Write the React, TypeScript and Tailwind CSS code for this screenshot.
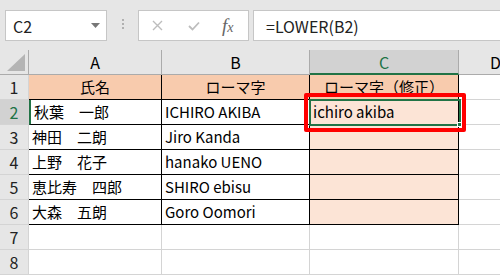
import React from "react";

const FONT = { fontFamily: '"Noto Sans CJK JP", "Noto Sans", sans-serif' };

const rows = [
  { n: 2, a: "秋葉　一郎", b: "ICHIRO AKIBA", c: "ichiro akiba" },
  { n: 3, a: "神田　二朗", b: "Jiro Kanda", c: "" },
  { n: 4, a: "上野　花子", b: "hanako UENO", c: "" },
  { n: 5, a: "恵比寿　四郎", b: "SHIRO ebisu", c: "" },
  { n: 6, a: "大森　五朗", b: "Goro Oomori", c: "" },
];

function RowHead({ n, active }: { n: number; active?: boolean }) {
  return (
    <div
      className={
        "flex h-[25px] items-center justify-center border-b border-r border-[#d4d4d4] text-[16px] " +
        (active ? "bg-[#d2d2d2] text-[#217346]" : "bg-[#e6e6e6] text-[#222]")
      }
    >
      {n}
    </div>
  );
}

export default function App() {
  return (
    <div className="relative h-[275px] w-[500px] overflow-hidden bg-[#e6e6e6]" style={FONT}>
      {/* toolbar */}
      <div className="flex h-[50px] items-start pt-[10px]">
        <div className="ml-[5px] flex h-[31px] w-[102px] items-center justify-between border border-[#c6c6c6] bg-white pl-[7px] pr-[6px]">
          <span className="text-[16px] text-[#222]">C2</span>
          <svg width="9" height="6" viewBox="0 0 9 6">
            <path d="M0 0H9L4.5 5z" fill="#777" />
          </svg>
        </div>
        <div className="flex w-[31px] flex-col items-center gap-[2px] pt-[9px]">
          <span className="h-[2px] w-[2px] bg-[#b0b0b0]" />
          <span className="h-[2px] w-[2px] bg-[#b0b0b0]" />
          <span className="h-[2px] w-[2px] bg-[#b0b0b0]" />
        </div>
        <div className="flex h-[31px] w-[111px] items-center border border-[#c6c6c6] bg-white">
          <svg className="ml-[13px]" width="11" height="11" viewBox="0 0 11 11">
            <path d="M1 1L10 10M10 1L1 10" stroke="#bdbdbd" strokeWidth="1.4" />
          </svg>
          <svg className="ml-[25px]" width="12" height="10" viewBox="0 0 12 10">
            <path d="M1 5L4.5 8.5L11 1.5" stroke="#bdbdbd" strokeWidth="1.8" fill="none" />
          </svg>
          <span
            className="ml-[22px] text-[19px] leading-none italic text-[#666]"
            style={{ fontFamily: '"Liberation Serif", serif' }}
          >
            f<span className="text-[14px]">x</span>
          </span>
        </div>
        <div className="ml-[4px] flex h-[31px] flex-1 items-center border border-r-0 border-[#c6c6c6] bg-white pl-[12px]">
          <span className="text-[16px] text-[#222]">=LOWER(B2)</span>
        </div>
      </div>

      {/* sheet */}
      <div className="grid grid-cols-[29px_133px_148px_149px_41px] bg-white text-[15px] text-black">
        {/* column headers */}
        <div className="relative h-[25px] border-b border-r border-[#ababab] bg-[#e6e6e6]">
          <svg className="absolute bottom-[3px] right-[3px]" width="18" height="17" viewBox="0 0 18 17">
            <path d="M18 0V17H0z" fill="#b4b4b4" />
          </svg>
        </div>
        <div className="flex h-[25px] items-center justify-center border-b border-r border-[#ababab] bg-[#e6e6e6] text-[16px]">A</div>
        <div className="flex h-[25px] items-center justify-center border-b border-r border-[#ababab] bg-[#e6e6e6] text-[16px]">B</div>
        <div className="flex h-[25px] items-center justify-center border-b-2 border-r border-b-[#217346] border-r-[#ababab] bg-[#d2d2d2] text-[16px] text-[#217346]">C</div>
        <div className="flex h-[25px] items-center border-b border-[#ababab] bg-[#e6e6e6] pl-[31px] text-[16px]">D</div>

        {/* row 1 */}
        <RowHead n={1} />
        <div className="flex h-[25px] items-center justify-center border-b border-r border-black bg-[#f8cbad]">氏名</div>
        <div className="flex h-[25px] items-center justify-center border-b border-r border-black bg-[#f8cbad]">ローマ字</div>
        <div className="flex h-[25px] items-center justify-center border-b border-r border-black bg-[#f8cbad]">ローマ字（修正）</div>
        <div className="h-[25px] border-b border-[#d4d4d4]" />

        {rows.map((r) => (
          <React.Fragment key={r.n}>
            <RowHead n={r.n} active={r.n === 2} />
            <div
              className={
                "flex h-[25px] items-center border-b border-r border-black pl-[3px] " +
                (r.n === 2 ? "border-l-2 border-l-[#217346]" : "")
              }
            >
              {r.a}
            </div>
            <div className="flex h-[25px] items-center border-b border-r border-black pl-[3px]">{r.b}</div>
            <div className="flex h-[25px] items-center border-b border-r border-black bg-[#fce4d6] pl-[3px]">{r.c}</div>
            <div className="h-[25px] border-b border-[#d4d4d4]" />
          </React.Fragment>
        ))}

        {[7, 8].map((n) => (
          <React.Fragment key={n}>
            <RowHead n={n} />
            <div className="h-[25px] border-b border-r border-[#d4d4d4]" />
            <div className="h-[25px] border-b border-r border-[#d4d4d4]" />
            <div className="h-[25px] border-b border-r border-[#d4d4d4]" />
            <div className="h-[25px] border-b border-[#d4d4d4]" />
          </React.Fragment>
        ))}
      </div>

      {/* active cell selection */}
      <div className="absolute left-[309px] top-[99px] h-[27px] w-[152px] border-2 border-[#217346]" />
      <div className="absolute left-[457px] top-[122px] h-[5px] w-[5px] border border-white bg-[#217346]" />
      {/* red highlight */}
      <div className="absolute left-[304px] top-[93px] h-[39px] w-[162px] rounded-[2px] border-[4px] border-[#ff0000]" />
    </div>
  );
}
